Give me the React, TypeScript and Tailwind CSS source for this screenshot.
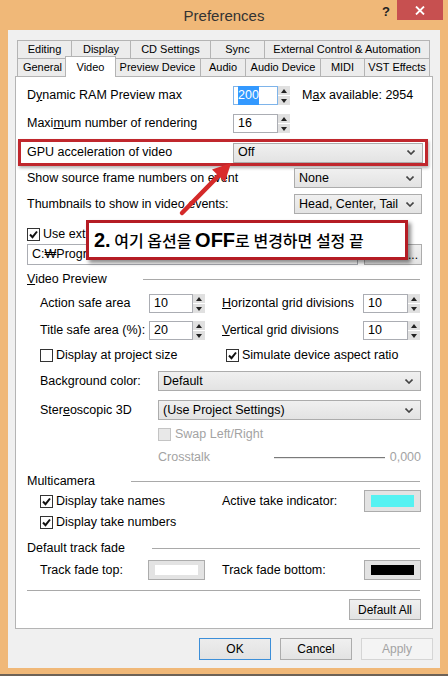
import React from 'react';

const row1: [string, string][] = [
	['Editing', 'w-[54px]'],
	['Display', 'w-[59px]'],
	['CD Settings', 'w-[80px]'],
	['Sync', 'w-[54px]'],
	['External Control & Automation', 'w-[166px] border-r'],
];

const row2: [string, string][] = [
	['General', 'w-[50px]'],
	['Video', 'sel'],
	['Preview Device', 'w-[86px]'],
	['Audio', 'w-[45px]'],
	['Audio Device', 'w-[75px]'],
	['MIDI', 'w-[44px]'],
	['VST Effects', 'w-[66px] border-r'],
];

function Tab({ label, cls }: { label: string; cls: string }) {
	if (cls === 'sel') {
		return (
			<div className="relative z-10 -mx-[2px] -mt-[2px] flex h-[21px] w-[51px] items-start justify-center border-l border-r border-t border-[#b4b4b4] bg-white pt-[2px] text-[11px]">
				{label}
			</div>
		);
	}
	return (
		<div className={`flex h-[18px] items-center justify-center border-l border-t border-[#b4b4b4] bg-[#ececec] text-[11px] ${cls}`}>
			{label}
		</div>
	);
}

function Arrows() {
	return (
		<div className="flex h-full w-[12px] flex-col gap-px">
			<div className="flex flex-1 items-center justify-center bg-[#e0e0e0]">
				<svg width="6" height="4" viewBox="0 0 6 4"><path d="M0 4 L3 0 L6 4Z" fill="#222" /></svg>
			</div>
			<div className="flex flex-1 items-center justify-center bg-[#e0e0e0]">
				<svg width="6" height="4" viewBox="0 0 6 4"><path d="M0 0 L3 4 L6 0Z" fill="#222" /></svg>
			</div>
		</div>
	);
}

function Spin({ value, w, sel }: { value: string; w: string; sel?: boolean }) {
	return (
		<div className="flex h-full">
			<div className={`flex h-full items-center border bg-white pl-[4px] ${w} ${sel ? 'border-[#7eb4ea]' : 'border-[#abadb3]'}`}>
				{sel ? <span className="bg-[#3399ff] text-white">{value}</span> : value}
			</div>
			<Arrows />
		</div>
	);
}

function Combo({ text, w }: { text: string; w: string }) {
	return (
		<div className={`flex h-[20px] items-center justify-between border border-[#acacac] bg-linear-to-b from-[#f0f0f0] to-[#e3e3e3] pl-[4px] pr-[7px] ${w}`}>
			<span>{text}</span>
			<svg width="8" height="5" viewBox="0 0 8 5"><path d="M0.5 0.5 L4 4 L7.5 0.5" fill="none" stroke="#444" strokeWidth="1.6" /></svg>
		</div>
	);
}

function Check({ on, disabled }: { on?: boolean; disabled?: boolean }) {
	return (
		<span className={`flex h-[13px] w-[13px] shrink-0 items-center justify-center border ${disabled ? 'border-[#c4c4c4] bg-[#e8e8e8]' : 'border-[#333] bg-white'}`}>
			{on && (
				<svg width="9" height="9" viewBox="0 0 9 9"><path d="M1 4.5 L3.5 7.2 L8 1.5" fill="none" stroke="#111" strokeWidth="2" /></svg>
			)}
		</span>
	);
}

function Group({ label, lw }: { label: React.ReactNode; lw: string }) {
	return (
		<div className="flex h-[14px] items-center">
			<span className={`shrink-0 ${lw}`}>{label}</span>
			<div className="mr-[2px] h-px flex-1 bg-[#a9a9a9]" />
		</div>
	);
}

function ColorBtn({ swatch }: { swatch: string }) {
	return (
		<div className="flex h-full w-[57px] border border-[#acacac] bg-[#e3e3e3] px-[6px] py-[4px]">
			<div className={`flex-1 ${swatch}`} />
		</div>
	);
}

function Btn({ label, kind }: { label: string; kind?: 'def' | 'off' }) {
	const look =
		kind === 'def'
			? 'border-[#3c8fd9] bg-linear-to-b from-[#ececec] to-[#e2e2e2] text-black'
			: kind === 'off'
			? 'border-[#d5d5d5] bg-[#f4f4f4] text-[#a3a3a3]'
			: 'border-[#acacac] bg-linear-to-b from-[#f0f0f0] to-[#e3e3e3] text-black';
	return (
		<div className={`flex h-[22px] w-[72px] items-center justify-center border text-[12px] ${look}`}>{label}</div>
	);
}

export default function App() {
	return (
		<div className="flex h-[676px] w-[448px] flex-col overflow-hidden bg-[#f0b878] font-['Liberation_Sans',Arial,sans-serif] text-black">
			{/* title bar */}
			<div className="grid h-[30px] shrink-0 grid-cols-[1fr_auto_1fr] items-start">
				<div />
				<div className="pt-[5px] text-[15px] text-[#333]">Preferences</div>
				<div className="flex items-start justify-end">
					<span className="mr-[7px] mt-[2px] text-[13px] font-bold text-[#222]">?</span>
					<div className="mr-[5px] flex h-[20px] w-[46px] items-center justify-center bg-[#c75050]">
						<svg width="10" height="9" viewBox="0 0 10 9"><path d="M1 0.5 L9 8.5 M9 0.5 L1 8.5" stroke="white" strokeWidth="1.8" /></svg>
					</div>
				</div>
			</div>

			{/* client area */}
			<div className="mx-[8px] flex h-[638px] shrink-0 flex-col bg-[#f0f0f0] px-[7px] pt-[10px]">
				<div className="ml-[2px] flex items-start">
					{row1.map(([l, c]) => <Tab key={l} label={l} cls={c} />)}
				</div>
				<div className="ml-[2px] flex h-[18px] items-start">
					{row2.map(([l, c]) => <Tab key={l} label={l} cls={c} />)}
				</div>

				<div className="relative flex h-[553px] flex-col border border-[#b4b4b4] bg-white pl-[11px] pr-[10px] pt-[9px] text-[12.5px]">
					<div className="flex h-[19px] items-center">
						<span className="w-[206px]">D<u>y</u>namic RAM Preview max</span>
						<Spin value="200" w="w-[45px]" sel />
						<span className="ml-[12px]">M<u>a</u>x available: 2954</span>
					</div>
					<div className="mt-[9px] flex h-[19px] items-center">
						<span className="w-[206px]">Maxi<u>m</u>um number of rendering</span>
						<Spin value="16" w="w-[45px]" />
					</div>
					<div className="-ml-[9px] mt-[6px] flex h-[27px] w-[410px] items-center border-[3px] border-[#c0272d] pl-[6px] shadow-[1px_2px_3px_rgba(0,0,0,0.3)]">
						<span className="w-[206px]">GPU acceleration of video</span>
						<Combo text="Off" w="w-[190px]" />
					</div>
					<div className="mt-[2px] flex h-[20px] items-center">
						<span className="flex-1">Show source frame numbers on event</span>
						<Combo text="None" w="w-[128px]" />
					</div>
					<div className="mt-[6px] flex h-[20px] items-center">
						<span className="flex-1">Thumbnails to show in video events:</span>
						<Combo text="Head, Center, Tail" w="w-[128px]" />
					</div>
					<div className="mt-[13px] flex h-[14px] items-center gap-[3px]">
						<Check on />
						<span className="w-[43px] overflow-hidden whitespace-nowrap">Use ext</span>
					</div>
					<div className="mt-[3px] flex h-[21px] items-center">
						<div className="flex h-full w-[331px] items-center border border-[#abadb3] bg-white pl-[4px]">
							<span className="w-[54px] overflow-hidden whitespace-nowrap">C:₩Progra</span>
						</div>
						<div className="ml-[6px] flex h-full w-[58px] items-center justify-end border border-[#acacac] bg-linear-to-b from-[#f0f0f0] to-[#e3e3e3] pr-[3px] text-[12px]">...</div>
					</div>
					<div className="mt-[7px]">
						<Group label={<><u>V</u>ideo Preview</>} lw="w-[116px]" />
					</div>
					<div className="mt-[8px] flex h-[19px] items-center pl-[13px]">
						<span className="w-[109px]">Action safe area</span>
						<Spin value="10" w="w-[44px]" />
						<span className="ml-[17px] w-[141px]"><u>H</u>orizontal grid divisions</span>
						<Spin value="10" w="w-[45px]" />
					</div>
					<div className="mt-[8px] flex h-[19px] items-center pl-[13px]">
						<span className="w-[109px]">Title safe area (%):</span>
						<Spin value="20" w="w-[44px]" />
						<span className="ml-[17px] w-[141px]"><u>V</u>ertical grid divisions</span>
						<Spin value="10" w="w-[45px]" />
					</div>
					<div className="mt-[8px] flex h-[14px] items-center pl-[13px]">
						<div className="flex w-[186px] items-center gap-[3px]">
							<Check />
							<span>Display at project size</span>
						</div>
						<div className="flex items-center gap-[3px]">
							<Check on />
							<span>Simulate device aspect ratio</span>
						</div>
					</div>
					<div className="mt-[9px] flex h-[20px] items-center pl-[13px]">
						<span className="w-[118px]">Background color:</span>
						<Combo text="Default" w="w-[263px]" />
					</div>
					<div className="mt-[9px] flex h-[20px] items-center pl-[13px]">
						<span className="w-[118px]">Ster<u>e</u>oscopic 3D</span>
						<Combo text="(Use Project Settings)" w="w-[263px]" />
					</div>
					<div className="mt-[7px] flex h-[14px] items-center gap-[4px] pl-[131px] text-[#a3a3a3]">
						<Check disabled />
						<span>Swap Left/Right</span>
					</div>
					<div className="mt-[9px] flex h-[15px] items-center pl-[131px] text-[#a3a3a3]">
						<span className="w-[116px]">Crosstalk</span>
						<div className="h-[2px] w-[111px] border-t border-[#7a7a7a] bg-[#e6e6e6]" />
						<span className="ml-auto mr-px">0,000</span>
					</div>
					<div className="mt-[9px]">
						<Group label="Multicamera" lw="w-[104px]" />
					</div>
					<div className="mt-[2px] flex h-[22px] items-center pl-[13px]">
						<div className="flex w-[182px] items-center gap-[3px]">
							<Check on />
							<span>Display take names</span>
						</div>
						<span className="w-[142px]">Active take indicator:</span>
						<ColorBtn swatch="bg-[#55f2f2]" />
					</div>
					<div className="mt-[3px] flex h-[14px] items-center gap-[3px] pl-[13px]">
						<Check on />
						<span>Display take numbers</span>
					</div>
					<div className="mt-[12px]">
						<Group label="Default track fade" lw="w-[125px]" />
					</div>
					<div className="mt-[5px] flex h-[20px] items-center pl-[13px]">
						<span className="w-[108px]">Track fade top:</span>
						<ColorBtn swatch="bg-white" />
						<span className="ml-[17px] w-[142px]">Track fade bottom:</span>
						<ColorBtn swatch="bg-black" />
					</div>
					<div className="mr-[2px] mt-[10px] h-px bg-[#a9a9a9]" />
					<div className="mr-px mt-[8px] flex justify-end">
						<div className="flex h-[21px] w-[72px] items-center justify-center border border-[#acacac] bg-linear-to-b from-[#f0f0f0] to-[#e3e3e3] text-[12px]">Default All</div>
					</div>

					{/* annotation arrow */}
					<svg className="absolute left-[154px] top-[78px]" width="70" height="70" viewBox="0 0 70 70">
						<path d="M12 58 L48.4 20.9" stroke="#d42a2a" strokeWidth="4.5" strokeLinecap="round" />
						<path d="M61 8 L55 27 L42 14.5Z" fill="#d92b2b" />
					</svg>

					{/* annotation callout */}
					<div className="absolute left-[70px] top-[143px] flex h-[40px] w-[322px] items-center border-[3px] border-[#b51c24] bg-white pl-[5px] shadow-[3px_3px_4px_rgba(0,0,0,0.45)]">
						<span className="text-[20px] font-bold">2.</span>
						<span className="whitespace-pre font-['Noto_Sans_CJK_KR',sans-serif] text-[16px] font-medium"> 여기 옵션을 </span>
						<span className="text-[20px] font-bold">OFF</span>
						<span className="whitespace-pre font-['Noto_Sans_CJK_KR',sans-serif] text-[16px] font-medium">로 변경하면 설정 끝</span>
					</div>
				</div>

				<div className="mt-[9px] flex justify-end gap-[9px]">
					<Btn label="OK" kind="def" />
					<Btn label="Cancel" />
					<Btn label="Apply" kind="off" />
				</div>
			</div>
			<div className="mt-auto h-[2px] bg-[#6d6257]" />
		</div>
	);
}
